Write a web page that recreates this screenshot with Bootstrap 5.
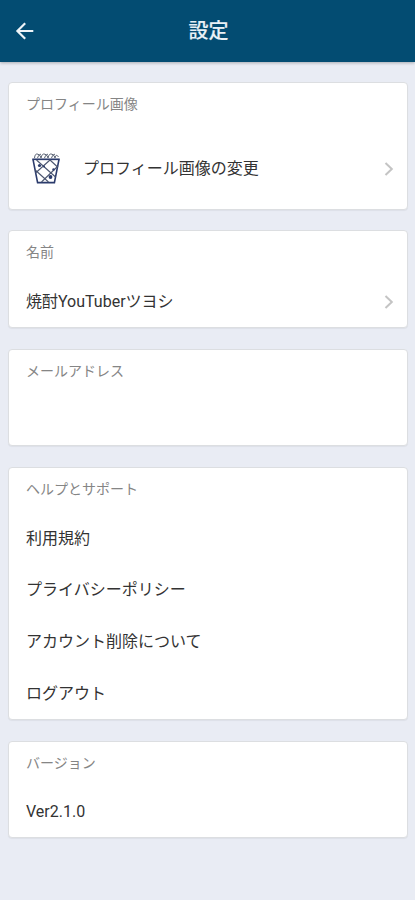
<!DOCTYPE html>
<html lang="ja">
<head>
<meta charset="utf-8">
<meta name="viewport" content="width=device-width, initial-scale=1">
<title>設定</title>
<link href="https://cdn.jsdelivr.net/npm/bootstrap@5.3.0/dist/css/bootstrap.min.css" rel="stylesheet">
<style>
body { background: #e9ecf4; font-family: Roboto, "Noto Sans CJK JP", sans-serif; color: #333; min-height: 900px; }
.app-bar { height: 62px; background: #034c72; box-shadow: 0 1px 3px rgba(0,0,0,.28); display: grid; grid-template-columns: 50px 1fr 48px; }
.app-title { font-size: 20px; font-weight: 500; line-height: 24px; color: #e9f1f6; -webkit-text-stroke: .15px #e9f1f6; }
.settings { padding: 20px 7px 0 8px; gap: 20.4px; }
.panel { border: 1px solid #dcdee1; border-radius: 4px; box-shadow: 0 1px 1px rgba(0,0,0,.05); }
.panel-label { height: 44px; padding: 0 17px 1px; font-size: 14px; color: #858585; }
.setting-row { height: 51.85px; padding: 1.5px 12px 0 17px; font-size: 16px; color: #333; }
.profile-row { height: 82px; padding-top: 2px; }
.avatar { width: 40px; margin: 0 17px 2px 0; }
</style>
</head>
<body>
<header class="app-bar align-items-center">
  <a href="#" class="d-flex justify-content-center" aria-label="戻る">
    <svg width="20" height="20" viewBox="0 0 20 20" fill="none" stroke="#eef4f8" stroke-width="2.2"><path d="M18.3 10H3M10.2 2.2 2.4 10 10.2 17.8"/></svg>
  </a>
  <h1 class="app-title text-center m-0">設定</h1>
</header>
<main class="settings d-flex flex-column">
  <section class="panel bg-white">
    <div class="panel-label d-flex align-items-center">プロフィール画像</div>
    <a href="#" class="setting-row profile-row d-flex align-items-center text-decoration-none">
      <span class="avatar d-flex justify-content-center">
        <svg width="32" height="34" viewBox="0 0 32 34" fill="none" stroke="#2b3b6c">
          <path d="M2.3 8.3H29.7" stroke-width="1.7"/>
          <path d="M3 8.3 7.6 31.6H24.4L29 8.3" stroke-width="1.6"/>
          <path d="M4.5 7Q5 2 8 3.2Q10.5 4 11 7Q12 2 15 3.2Q17.5 4 18 7Q19 2 22 3.2Q24.5 4 25 7Q26 2 28.5 6M7.5 7Q8 4 11 3M14.5 7Q15 4 18 3M21.5 7Q22 4 25 3" stroke="#596273"/>
          <path d="M6.5 9 25.5 26M20 9 5.5 22M20 9 27 15.5M28 15 11.5 31M5.2 19 18.5 31" stroke="#4b5670" stroke-width="1.1"/>
          <g fill="#2b3b6c" stroke="none"><circle cx="9.5" cy="14.5" r="1.6"/><circle cx="20.5" cy="26" r="1.9"/><circle cx="14" cy="15.5" r="1"/><circle cx="23.5" cy="18.5" r="1.2"/></g>
        </svg>
      </span>
      <span>プロフィール画像の変更</span>
      <svg class="ms-auto" width="12" height="14" viewBox="0 0 12 14" fill="none" stroke="#c4c4c4" stroke-width="2"><path d="M2.5 1 8.8 7 2.5 13"/></svg>
    </a>
  </section>
  <section class="panel bg-white">
    <div class="panel-label d-flex align-items-center">名前</div>
    <a href="#" class="setting-row d-flex align-items-center text-decoration-none">
      <span>焼酎YouTuberツヨシ</span>
      <svg class="ms-auto" width="12" height="14" viewBox="0 0 12 14" fill="none" stroke="#c4c4c4" stroke-width="2"><path d="M2.5 1 8.8 7 2.5 13"/></svg>
    </a>
  </section>
  <section class="panel bg-white">
    <div class="panel-label d-flex align-items-center">メールアドレス</div>
    <div class="setting-row"></div>
  </section>
  <section class="panel bg-white">
    <div class="panel-label d-flex align-items-center">ヘルプとサポート</div>
    <a href="#" class="setting-row d-flex align-items-center text-decoration-none">利用規約</a>
    <a href="#" class="setting-row d-flex align-items-center text-decoration-none">プライバシーポリシー</a>
    <a href="#" class="setting-row d-flex align-items-center text-decoration-none">アカウント削除について</a>
    <a href="#" class="setting-row d-flex align-items-center text-decoration-none">ログアウト</a>
  </section>
  <section class="panel bg-white">
    <div class="panel-label d-flex align-items-center">バージョン</div>
    <div class="setting-row d-flex align-items-center">Ver2.1.0</div>
  </section>
</main>
<script src="https://cdn.jsdelivr.net/npm/bootstrap@5.3.0/dist/js/bootstrap.bundle.min.js"></script>
</body>
</html>
